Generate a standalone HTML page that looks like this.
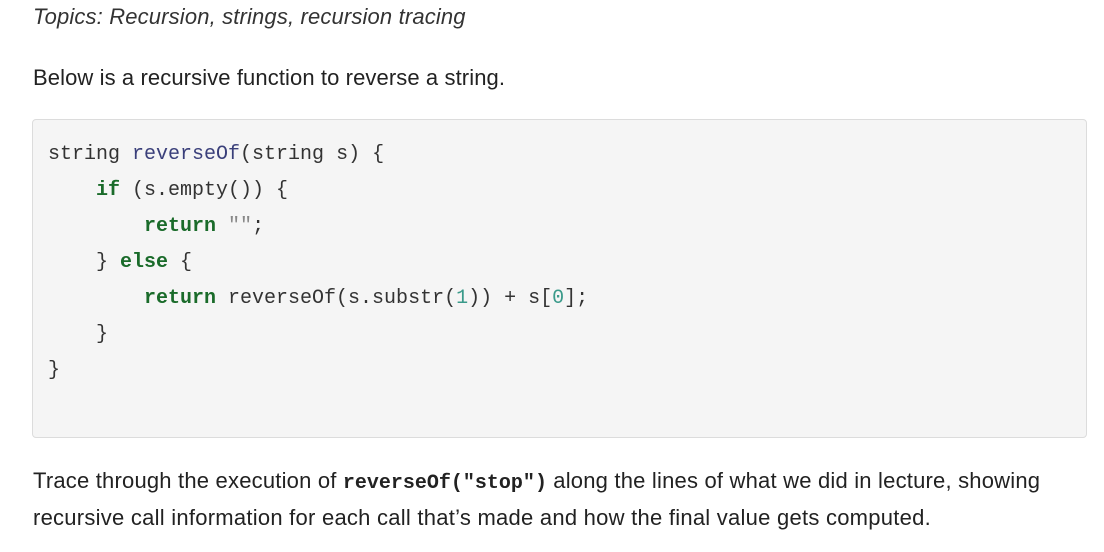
<!DOCTYPE html>
<html><head><meta charset="utf-8"><style>
body{margin:0;background:#fff;width:1104px;height:552px;overflow:hidden;font-family:"Liberation Sans",sans-serif;color:#222;}
.t{position:absolute;left:33px;font-size:22px;white-space:nowrap;}
.code{position:absolute;left:32px;top:119px;width:1053px;height:317px;background:#f5f5f5;border:1px solid #dcdcdc;border-radius:4px;}
.l{position:absolute;left:48px;font-family:"Liberation Mono",monospace;font-size:20px;color:#333;white-space:pre;}
.k{color:#1a6b2a;font-weight:bold}
.f{color:#3a3f7a}
.n{color:#3a9a8a}
code{font-family:"Liberation Mono",monospace;font-weight:bold;font-size:20px;letter-spacing:0;}
</style></head><body>
<div class="t" style="top:4px;font-style:italic;color:#333;font-size:22px;letter-spacing:0.15px;">Topics: Recursion, strings, recursion tracing</div>
<div class="t" style="top:65px;letter-spacing:0.1px;">Below is a recursive function to reverse a string.</div>
<div class="code"></div>
<div class="l" style="top:143px">string <span class="f">reverseOf</span>(string s) {</div>
<div class="l" style="top:179px">    <span class="k">if</span> (s.empty()) {</div>
<div class="l" style="top:215px">        <span class="k">return</span> <span style="color:#888">""</span>;</div>
<div class="l" style="top:251px">    } <span class="k">else</span> {</div>
<div class="l" style="top:287px">        <span class="k">return</span> reverseOf(s.substr(<span class="n">1</span>)) + s[<span class="n">0</span>];</div>
<div class="l" style="top:323px">    }</div>
<div class="l" style="top:359px">}</div>
<div class="t" style="top:468px;letter-spacing:0.2px;">Trace through the execution of <code>reverseOf("stop")</code> along the lines of what we did in lecture, showing</div>
<div class="t" style="top:505px;letter-spacing:0.25px;">recursive call information for each call that’s made and how the final value gets computed.</div>
</body></html>
